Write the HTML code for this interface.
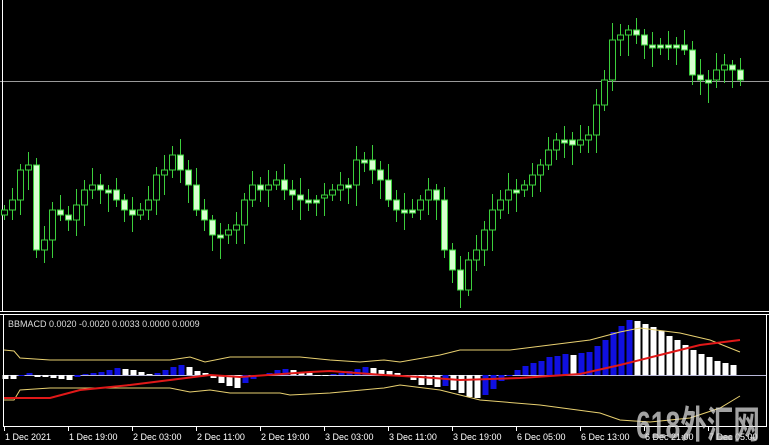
<!DOCTYPE html>
<html><head><meta charset="utf-8"><style>
html,body{margin:0;padding:0;background:#000;width:769px;height:445px;overflow:hidden}
svg{display:block}
text{font-family:"Liberation Sans","Noto Sans CJK SC",sans-serif}
</style></head><body>
<svg id="s" width="769" height="445" xmlns="http://www.w3.org/2000/svg">
<rect width="769" height="445" fill="#000"/>
<line x1="0" y1="81.5" x2="769" y2="81.5" stroke="#9a9a9a" stroke-width="1"/>
<line x1="2.5" y1="0" x2="2.5" y2="311" stroke="#fff"/>
<g id="c"></g>
<line x1="0" y1="311.5" x2="769" y2="311.5" stroke="#fff"/>
<line x1="0" y1="314.5" x2="769" y2="314.5" stroke="#fff"/>
<line x1="3.5" y1="314" x2="3.5" y2="427" stroke="#fff"/>
<line x1="766.5" y1="314" x2="766.5" y2="427" stroke="#fff"/>
<line x1="3" y1="426.5" x2="767" y2="426.5" stroke="#fff"/>
<text x="8" y="327" font-size="9" fill="#ddd">BBMACD 0.0020 -0.0020 0.0033 0.0000 0.0009</text>
<line x1="4" y1="375.5" x2="766" y2="375.5" stroke="#b8b8d8"/>
<g id="h"></g>
<polyline fill="none" stroke="#e8d070" stroke-width="1" points="4,350 14,351 20,358 50,360 170,360 190,357 205,362 230,357 300,357 330,360 360,362 384,360 400,362 440,355 460,350 510,350 550,345 590,340 620,332 640,328 680,333 710,340 740,352"/>
<polyline fill="none" stroke="#e8d070" stroke-width="1" points="4,400 14,400 20,390 50,388 170,388 190,392 210,390 230,393 280,393 290,395 330,393 384,388 400,385 440,390 480,400 540,405 600,413 620,420 650,422 690,418 720,408 740,396"/>
<polyline fill="none" stroke="#e01818" stroke-width="2" points="4,398 50,398 80,390 130,385 170,380 210,375 240,377 310,372 330,371 384,375 420,377 460,380 520,378 580,374 620,365 660,355 700,345 740,340"/>
<g id="t" font-size="9" fill="#fff"></g>
<text x="636" y="438" font-size="38" font-weight="bold" fill="#d8d8d8" fill-opacity="0.75" textLength="124" lengthAdjust="spacingAndGlyphs">618外汇网</text>
</svg>
<script>
(function(){
var NS="http://www.w3.org/2000/svg";
function el(p,n,a){var e=document.createElementNS(NS,n);for(var k in a)e.setAttribute(k,a[k]);p.appendChild(e);return e;}
var closes=[210,200,170,165,250,240,210,215,220,205,190,185,190,190,200,210,215,210,200,175,170,155,170,185,210,220,235,235,230,225,200,185,190,185,180,190,195,200,200,198,195,190,185,185,160,160,170,180,200,210,210,210,200,190,200,250,270,290,260,250,230,210,200,190,190,185,175,165,150,140,140,145,140,135,105,80,40,35,30,35,45,45,45,45,45,50,75,80,80,70,65,70,80];
var g=document.getElementById('c');var prev=215;
for(var i=0;i<closes.length;i++){var x=4+8*i;var o=prev,c=closes[i];if(Math.abs(o-c)<3)c=o+3;
var tp=Math.min(o,c),bt=Math.max(o,c);var hi=tp-5-(i*7%13),lo=bt+5+(i*5%17);
el(g,'line',{x1:x+.5,y1:hi,x2:x+.5,y2:lo,stroke:'#3ccf3c'});
el(g,'rect',{x:x-2.5,y:tp,width:6,height:bt-tp,fill:(c>o)?'#d8ffd0':'#000',stroke:'#3ccf3c'});
prev=closes[i];}
var hv=[-4,-4,-1,2,-2,-2,-3,-4,-5,-2,1,2,3,5,7,6,5,3,1,2,5,8,10,8,4,2,-3,-8,-11,-13,-8,-4,0,2,5,6,5,3,2,0,-1,1,2,4,6,8,7,5,4,2,-1,-5,-10,-10,-12,-11,-15,-18,-22,-23,-20,-14,-6,0,5,9,12,14,18,19,21,20,22,23,29,35,43,49,55,54,51,48,44,39,35,30,25,21,18,14,12,10];
var hg=document.getElementById('h');var p=0;
for(var i=0;i<hv.length;i++){var x=5+8*i,v=hv[i];if(x>745)break;var col=(v>p)?'#1010e0':'#fff';
var y=v>0?375-v:375;el(hg,'rect',{x:x-2.5,y:y,width:6,height:Math.max(Math.abs(v),1),fill:col});p=v;}
var lab=["1 Dec 2021","1 Dec 19:00","2 Dec 03:00","2 Dec 11:00","2 Dec 19:00","3 Dec 03:00","3 Dec 11:00","3 Dec 19:00","6 Dec 05:00","6 Dec 13:00","6 Dec 21:00","7 Dec 05:00"];
var tg=document.getElementById('t');
for(var i=0;i<lab.length;i++){var x=4+64*i;el(tg,'line',{x1:x+.5,y1:426,x2:x+.5,y2:431,stroke:'#fff'});var t=el(tg,'text',{x:x+1,y:440});t.textContent=lab[i];}
})();
</script>
</body></html>
